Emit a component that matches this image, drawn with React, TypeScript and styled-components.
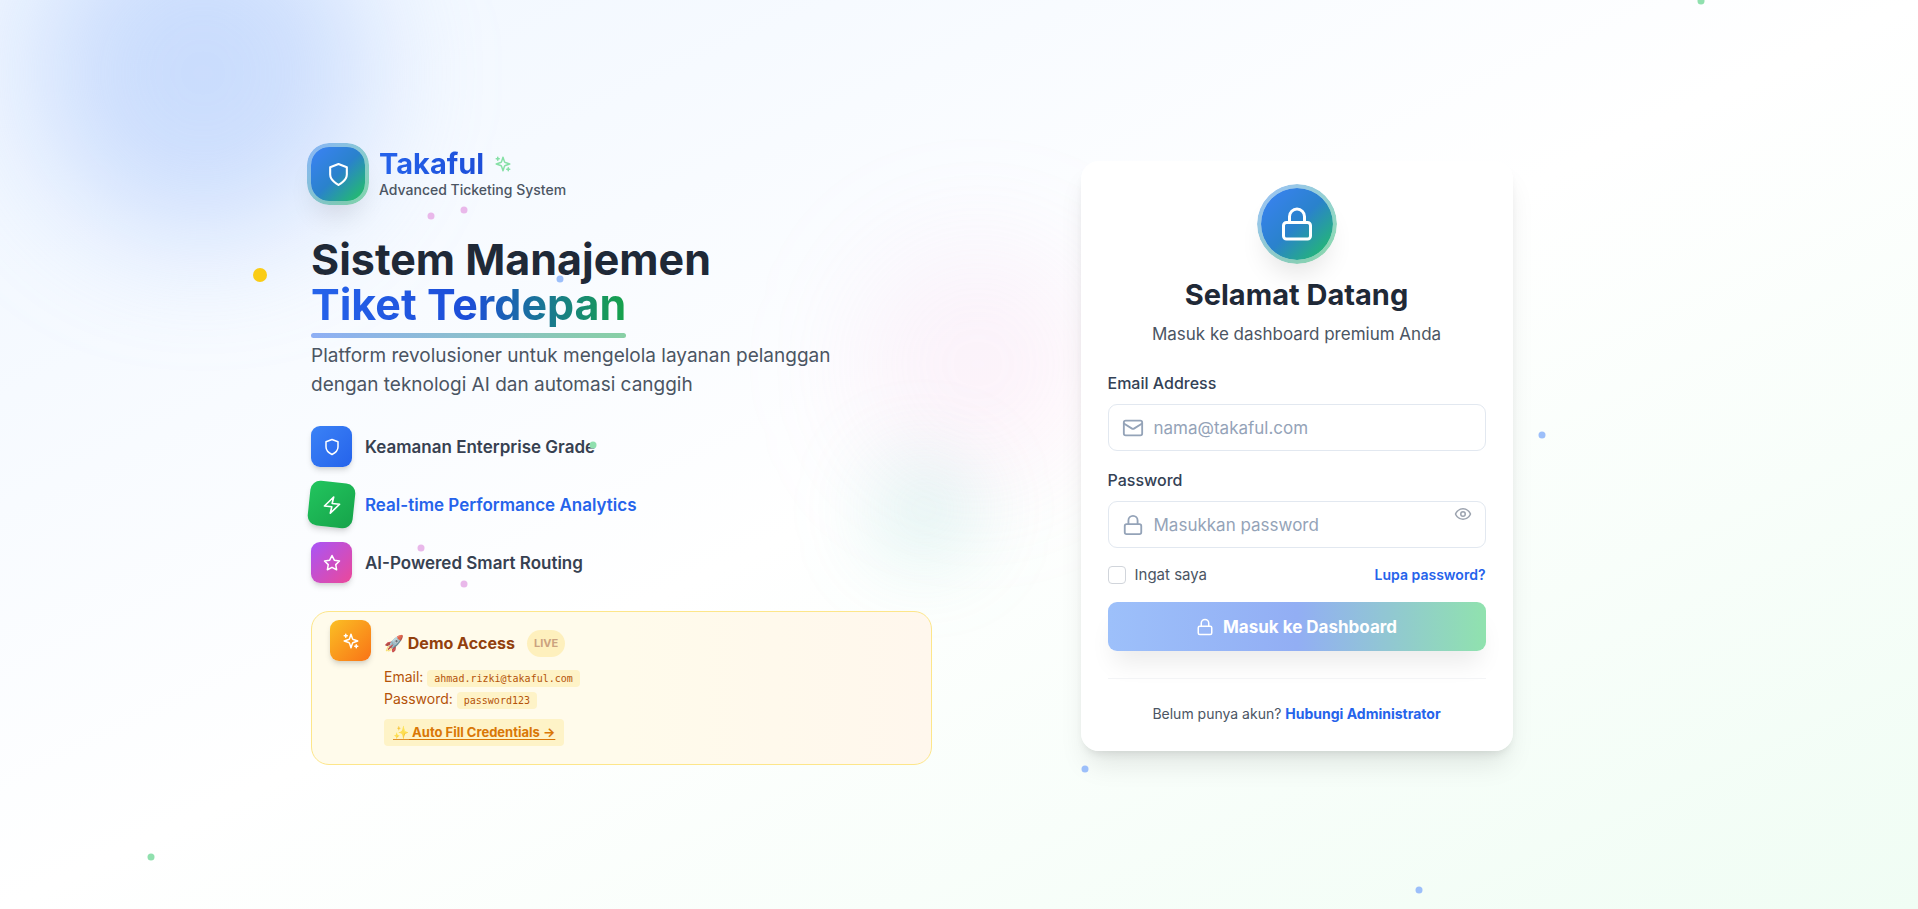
import React from "react";
import styled, { createGlobalStyle, css } from "styled-components";

const Global = createGlobalStyle`
  *, *::before, *::after { box-sizing: border-box; }
  body { margin: 0; font-family: Inter, "Noto Sans", sans-serif; color: #1f2937; }
  h1, h2, h3, p, ul { margin: 0; padding: 0; }
  button, input { font: inherit; }
`;

const Page = styled.div`
  position: relative;
  min-height: 100vh;
  overflow: hidden;
  display: flex;
  align-items: center;
  justify-content: center;
  padding: 16px 20px 13px;
  background: linear-gradient(to bottom right, #eff6ff, #ffffff 50%, #f0fdf4);
`;

const Backdrop = styled.div`
  position: absolute;
  inset: 0;
  pointer-events: none;
`;

const Blob = styled.div<{ $x: number; $y: number; $size: number; $color: string; $blur: number }>`
  position: absolute;
  left: ${(p) => p.$x}%;
  top: ${(p) => p.$y}%;
  width: ${(p) => p.$size}px;
  height: ${(p) => p.$size}px;
  border-radius: 50%;
  transform: translate(-50%, -50%);
  background: ${(p) => p.$color};
  filter: blur(${(p) => p.$blur}px);
`;

const Dot = styled.span<{ $x: number; $y: number; $color: string; $size?: number }>`
  position: absolute;
  left: ${(p) => p.$x}%;
  top: ${(p) => p.$y}%;
  width: ${(p) => p.$size ?? 7}px;
  height: ${(p) => p.$size ?? 7}px;
  border-radius: 50%;
  transform: translate(-50%, -50%);
  background: ${(p) => p.$color};
`;

const Layout = styled.main`
  position: relative;
  width: 100%;
  max-width: 1296px;
  display: grid;
  grid-template-columns: 1fr 1fr;
  gap: 54px;
  align-items: center;
  @media (max-width: 900px) { grid-template-columns: 1fr; }
`;

const Intro = styled.section`
  display: flex;
  flex-direction: column;
  align-items: stretch;
`;

const Brand = styled.div`
  display: flex;
  align-items: center;
  gap: 14px;
  margin-bottom: 36px;
`;

const BrandTile = styled.div<{ $round?: boolean }>`
  position: relative;
  flex: none;
  width: ${(p) => (p.$round ? 72 : 54)}px;
  height: ${(p) => (p.$round ? 72 : 54)}px;
  border-radius: ${(p) => (p.$round ? "50%" : "18px")};
  display: grid;
  place-items: center;
  color: #fff;
  background: linear-gradient(to bottom right, #3b82f6, #2a82cc 50%, #22c55e);
  box-shadow: 0 18px 28px -6px rgba(0, 0, 0, 0.12);
  &::before {
    content: "";
    position: absolute;
    inset: -4px;
    border-radius: ${(p) => (p.$round ? "50%" : "22px")};
    border: 4px solid transparent;
    background: linear-gradient(to bottom right, #3b82f6, #22c55e) border-box;
    mask: linear-gradient(#000 0 0) padding-box exclude, linear-gradient(#000 0 0);
    opacity: 0.5;
  }
`;

const BrandName = styled.div`
  display: flex;
  align-items: center;
  gap: 10px;
  font-size: 29px;
  line-height: 32px;
  font-weight: 700;
  color: #86e0a6;
`;

const BrandWord = styled.span`
  background: linear-gradient(to right, #2563eb, #1d4ed8);
  background-clip: text;
  color: transparent;
`;

const Tagline = styled.p`
  font-size: 14px;
  line-height: 20px;
  font-weight: 500;
  color: #4b5563;
`;

const Headline = styled.h1`
  font-size: 43px;
  line-height: 45px;
  font-weight: 700;
  color: #1f2937;
`;

const Accent = styled.span`
  position: relative;
  display: block;
  width: fit-content;
  background: linear-gradient(to right, #2563eb, #1d4ed8 50%, #16a34a);
  background-clip: text;
  color: transparent;
  &::after {
    content: "";
    position: absolute;
    left: 0;
    right: 0;
    bottom: -11px;
    height: 5px;
    border-radius: 3px;
    background: linear-gradient(to right, #2563eb, #16a34a);
    opacity: 0.5;
  }
`;

const Lead = styled.p`
  margin-top: 14px;
  font-size: 19px;
  line-height: 29px;
  color: #4b5563;
`;

const Features = styled.ul`
  list-style: none;
  margin: 27px 0 28px;
  display: grid;
  gap: 17px;
`;

const Feature = styled.li<{ $active?: boolean }>`
  display: flex;
  align-items: center;
  gap: 13px;
  font-size: 17px;
  line-height: 24px;
  font-weight: 600;
  color: ${(p) => (p.$active ? "#2563eb" : "#374151")};
`;

const IconTile = styled.span<{ $from: string; $to: string; $tilt?: boolean }>`
  flex: none;
  width: 41px;
  height: 41px;
  border-radius: 9px;
  display: grid;
  place-items: center;
  color: #fff;
  background: linear-gradient(to bottom right, ${(p) => p.$from}, ${(p) => p.$to});
  box-shadow: 0 4px 6px -1px rgba(0, 0, 0, 0.14), 0 2px 4px -2px rgba(0, 0, 0, 0.1);
  ${(p) => p.$tilt && css`transform: rotate(6deg) scale(1.1);`}
`;

const Demo = styled.aside`
  display: flex;
  align-items: flex-start;
  gap: 13px;
  padding: 8px 18px 18px;
  border: 1px solid #fde68a;
  border-radius: 18px;
  background: linear-gradient(to right, #fffbeb, #fffbeb 50%, #fff7ed);
`;

const DemoBody = styled.div`
  padding-top: 10px;
`;

const DemoTitle = styled.h3`
  display: flex;
  align-items: center;
  gap: 12px;
  margin-bottom: 9px;
  font-size: 16px;
  line-height: 27px;
  font-weight: 700;
  color: #92400e;
`;

const Emoji = styled.span`
  opacity: 0.8;
`;

const Live = styled.span`
  padding: 0 7px;
  border-radius: 14px;
  background: #fef0bd;
  font-size: 11px;
  line-height: 27px;
  color: #cba27f;
`;

const Credential = styled.p`
  font-size: 14px;
  line-height: 22px;
  color: #b45309;
`;

const Code = styled.code`
  padding: 3px 7px;
  border-radius: 4px;
  background: #fef3c7;
  font-family: "DejaVu Sans Mono", monospace;
  font-size: 10px;
  line-height: 12px;
`;

const AutoFill = styled.button`
  margin-top: 9px;
  padding: 0 9px;
  border: 0;
  border-radius: 4px;
  background: #fef3c7;
  color: #d97706;
  font-size: 13px;
  line-height: 27px;
  font-weight: 700;
  text-decoration: underline;
  text-underline-offset: 2px;
  cursor: pointer;
`;

const Card = styled.section`
  justify-self: center;
  width: 100%;
  max-width: 432px;
  padding: 27px;
  border-radius: 18px;
  background: rgba(255, 255, 255, 0.95);
  box-shadow: 0 18px 28px -6px rgba(0, 0, 0, 0.1), 0 6px 10px -4px rgba(0, 0, 0, 0.1);
`;

const CardHead = styled.header`
  display: flex;
  flex-direction: column;
  align-items: center;
  text-align: center;
`;

const CardTitle = styled.h2`
  margin-top: 18px;
  font-size: 29px;
  line-height: 34px;
  font-weight: 700;
`;

const CardSub = styled.p`
  margin-top: 9px;
  font-size: 17px;
  line-height: 26px;
  color: #4b5563;
`;

const Form = styled.form`
  margin-top: 24px;
`;

const Field = styled.div`
  margin-bottom: 17px;
`;

const Label = styled.label`
  display: block;
  margin-bottom: 9px;
  font-size: 16px;
  line-height: 24px;
  font-weight: 500;
  color: #334155;
`;

const InputBox = styled.div`
  display: flex;
  align-items: center;
  gap: 10px;
  height: 47px;
  padding: 0 13px;
  border: 1px solid #e2e8f0;
  border-radius: 9px;
  background: #fff;
  color: #94a3b8;
`;

const Input = styled.input`
  flex: 1;
  min-width: 0;
  border: 0;
  outline: 0;
  padding: 0;
  background: none;
  font-size: 17px;
  line-height: 24px;
  color: #1f2937;
  &::placeholder { color: #94a3b8; opacity: 1; }
`;

const Reveal = styled.button`
  align-self: flex-start;
  margin-top: 3px;
  padding: 0;
  border: 0;
  background: none;
  color: #9ca3af;
  display: flex;
  cursor: pointer;
`;

const Options = styled.div`
  display: flex;
  align-items: center;
  justify-content: space-between;
  margin-bottom: 17px;
  font-size: 14px;
  line-height: 20px;
`;

const Remember = styled.label`
  display: flex;
  align-items: center;
  gap: 9px;
  font-size: 15px;
  color: #4b5563;
`;

const Check = styled.input`
  appearance: none;
  margin: 0;
  width: 18px;
  height: 18px;
  border: 1px solid #d1d5db;
  border-radius: 4px;
  background: #fff;
  &:checked { background: #2563eb; }
`;

const TextLink = styled.a<{ $bold?: boolean }>`
  color: #2563eb;
  font-weight: ${(p) => (p.$bold ? 700 : 600)};
  text-decoration: none;
`;

const Submit = styled.button`
  display: flex;
  align-items: center;
  justify-content: center;
  gap: 9px;
  width: 100%;
  height: 49px;
  border: 0;
  border-radius: 9px;
  color: #fff;
  font-size: 17px;
  font-weight: 700;
  background: linear-gradient(to right, #9dc0fa, #92aef4 50%, #90e2ae);
  box-shadow: 0 18px 24px -6px rgba(0, 0, 0, 0.08);
`;

const CardFoot = styled.footer`
  margin-top: 27px;
  padding-top: 25px;
  border-top: 1px solid #f3f4f6;
  text-align: center;
  font-size: 14px;
  line-height: 20px;
  color: #4b5563;
`;

const Icon = ({ size, children }: { size: number; children: React.ReactNode }) => (
  <svg width={size} height={size} viewBox="0 0 24 24" fill="none" stroke="currentColor" strokeWidth="2"
    strokeLinecap="round" strokeLinejoin="round" aria-hidden="true">{children}</svg>
);

const Shield = ({ size }: { size: number }) => (
  <Icon size={size}><path d="M12 22s8-4 8-10V5l-8-3-8 3v7c0 6 8 10 8 10" /></Icon>
);
const Sparkles = ({ size }: { size: number }) => (
  <Icon size={size}>
    <path d="m12 3-1.912 5.813a2 2 0 0 1-1.275 1.275L3 12l5.813 1.912a2 2 0 0 1 1.275 1.275L12 21l1.912-5.813a2 2 0 0 1 1.275-1.275L21 12l-5.813-1.912a2 2 0 0 1-1.275-1.275L12 3Z" />
    <path d="M5 3v4M19 17v4M3 5h4M17 19h4" />
  </Icon>
);
const Zap = ({ size }: { size: number }) => (
  <Icon size={size}><polygon points="13 2 3 14 12 14 11 22 21 10 12 10 13 2" /></Icon>
);
const Star = ({ size }: { size: number }) => (
  <Icon size={size}><polygon points="12 2 15.09 8.26 22 9.27 17 14.14 18.18 21.02 12 17.77 5.82 21.02 7 14.14 2 9.27 8.91 8.26 12 2" /></Icon>
);
const Lock = ({ size }: { size: number }) => (
  <Icon size={size}><rect width="18" height="11" x="3" y="11" rx="2" /><path d="M7 11V7a5 5 0 0 1 10 0v4" /></Icon>
);
const Mail = ({ size }: { size: number }) => (
  <Icon size={size}><rect width="20" height="16" x="2" y="4" rx="2" /><path d="m22 7-8.97 5.7a1.94 1.94 0 0 1-2.06 0L2 7" /></Icon>
);
const Eye = ({ size }: { size: number }) => (
  <Icon size={size}><path d="M2 12s3-7 10-7 10 7 10 7-3 7-10 7-10-7-10-7Z" /><circle cx="12" cy="12" r="3" /></Icon>
);

const blue = "#9cbffa";
const green = "#90e0ae";
const pink = "#e9b8ea";

const dots = [
  { x: 22.45, y: 23.75, c: pink },
  { x: 24.2, y: 23.15, c: pink },
  { x: 21.97, y: 60.3, c: pink },
  { x: 24.2, y: 64.3, c: pink },
  { x: 29.2, y: 30.7, c: blue },
  { x: 80.4, y: 47.8, c: blue },
  { x: 56.55, y: 84.6, c: blue },
  { x: 74, y: 97.95, c: blue },
  { x: 30.9, y: 48.95, c: green },
  { x: 7.85, y: 94.3, c: green },
  { x: 88.7, y: 0.1, c: green },
];

export default function App() {
  return (
    <Page>
      <Global />
      <Backdrop aria-hidden="true">
        <Blob $x={10.6} $y={8} $size={330} $color="rgba(147, 183, 250, 0.42)" $blur={62} />
        <Blob $x={51} $y={40} $size={240} $color="rgba(236, 160, 220, 0.13)" $blur={58} />
        <Blob $x={48.2} $y={56} $size={110} $color="rgba(94, 200, 190, 0.18)" $blur={40} />
      </Backdrop>
      <Layout>
        <Intro>
          <Brand>
            <BrandTile><Shield size={25} /></BrandTile>
            <div>
              <BrandName><BrandWord>Takaful</BrandWord><Sparkles size={18} /></BrandName>
              <Tagline>Advanced Ticketing System</Tagline>
            </div>
          </Brand>
          <Headline>Sistem Manajemen<Accent>Tiket Terdepan</Accent></Headline>
          <Lead>Platform revolusioner untuk mengelola layanan pelanggan<br />dengan teknologi AI dan automasi canggih</Lead>
          <Features>
            <Feature><IconTile $from="#3b82f6" $to="#2563eb"><Shield size={18} /></IconTile>Keamanan Enterprise Grade</Feature>
            <Feature $active><IconTile $from="#22c55e" $to="#16a34a" $tilt><Zap size={18} /></IconTile>Real-time Performance Analytics</Feature>
            <Feature><IconTile $from="#a855f7" $to="#ec4899"><Star size={18} /></IconTile>AI-Powered Smart Routing</Feature>
          </Features>
          <Demo>
            <IconTile $from="#fbbf24" $to="#f97316"><Sparkles size={18} /></IconTile>
            <DemoBody>
              <DemoTitle><span><Emoji>🚀</Emoji> Demo Access</span><Live>LIVE</Live></DemoTitle>
              <Credential>Email: <Code>ahmad.rizki@takaful.com</Code></Credential>
              <Credential>Password: <Code>password123</Code></Credential>
              <AutoFill type="button"><Emoji>✨</Emoji> Auto Fill Credentials →</AutoFill>
            </DemoBody>
          </Demo>
        </Intro>
        <Card>
          <CardHead>
            <BrandTile $round><Lock size={36} /></BrandTile>
            <CardTitle>Selamat Datang</CardTitle>
            <CardSub>Masuk ke dashboard premium Anda</CardSub>
          </CardHead>
          <Form onSubmit={(e) => e.preventDefault()}>
            <Field>
              <Label htmlFor="email">Email Address</Label>
              <InputBox>
                <Mail size={22} />
                <Input id="email" type="email" placeholder="nama@takaful.com" />
              </InputBox>
            </Field>
            <Field>
              <Label htmlFor="password">Password</Label>
              <InputBox>
                <Lock size={22} />
                <Input id="password" type="password" placeholder="Masukkan password" />
                <Reveal type="button" aria-label="Tampilkan password"><Eye size={18} /></Reveal>
              </InputBox>
            </Field>
            <Options>
              <Remember><Check type="checkbox" />Ingat saya</Remember>
              <TextLink href="#lupa">Lupa password?</TextLink>
            </Options>
            <Submit type="submit"><Lock size={18} />Masuk ke Dashboard</Submit>
          </Form>
          <CardFoot>Belum punya akun? <TextLink $bold href="#admin">Hubungi Administrator</TextLink></CardFoot>
        </Card>
      </Layout>
      <Backdrop aria-hidden="true">
        {dots.map((d) => <Dot key={`${d.x}-${d.y}`} $x={d.x} $y={d.y} $color={d.c} />)}
        <Dot $x={13.55} $y={30.25} $color="#facc15" $size={14} />
      </Backdrop>
    </Page>
  );
}
